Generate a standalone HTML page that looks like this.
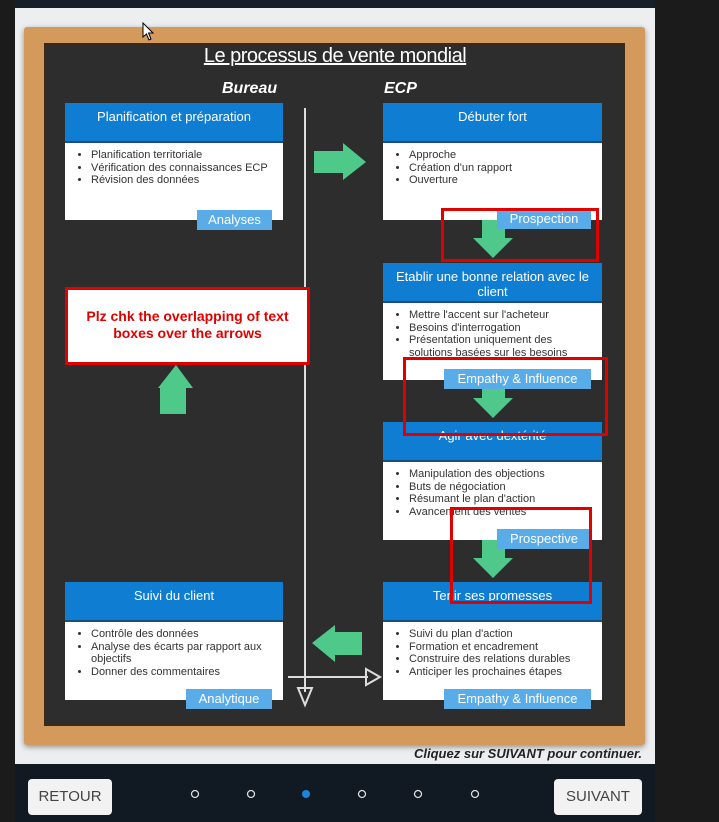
<!DOCTYPE html>
<html><head><meta charset="utf-8"><style>
*{margin:0;padding:0;box-sizing:border-box}
body{width:719px;height:822px;background:#1b1b1b;position:relative;overflow:hidden;font-family:"Liberation Sans",sans-serif}
.a{position:absolute}
.hd{position:absolute;background:#0f7dd2;color:#fff;font-size:13px;text-align:center;padding-top:6px;line-height:15px;border-bottom:2px solid #1b4f7a}
.bd{position:absolute;background:#fff;color:#333;font-size:11px;line-height:12.5px;padding:6px 4px 0 26px}
.bd li{list-style:disc}
.tag{position:absolute;background:#5aace8;color:#fff;font-size:13px;text-align:center;line-height:20px;height:20px}
.red{position:absolute;border:3px solid #e00000}
</style></head><body>
<div class="a" style="left:15px;top:0;width:640px;height:8px;background:#161e29"></div>
<div class="a" style="left:15px;top:8px;width:640px;height:756px;background:#eceef0"></div>
<div class="a" style="left:15px;top:764px;width:640px;height:58px;background:#111923"></div>
<!-- frame -->
<div class="a" style="left:24px;top:27px;width:621px;height:718px;background:#d49a5c;border-radius:3px;box-shadow:0 2px 6px rgba(0,0,0,.4)"></div>
<div class="a" style="left:44px;top:43px;width:581px;height:683px;background:#2d2d2d;border:2px solid #3a2a1a"></div>
<div class="a" style="left:0;top:45px;width:670px;text-align:center;color:#fff;font-size:20px;text-decoration:underline;letter-spacing:-.5px">Le processus de vente mondial</div>
<div class="a" style="left:222px;top:80px;color:#fff;font-size:16px;font-style:italic;font-weight:bold">Bureau</div>
<div class="a" style="left:384px;top:80px;color:#fff;font-size:16px;font-style:italic;font-weight:bold">ECP</div>
<!-- lines -->
<svg class="a" style="left:0;top:0" width="719" height="822">
<line x1="305" y1="108" x2="305" y2="692" stroke="#ddd" stroke-width="2"/>
<path d="M298 688 L312 688 L305 705 Z" fill="none" stroke="#ddd" stroke-width="2"/>
<line x1="288" y1="677" x2="368" y2="677" stroke="#ddd" stroke-width="2"/>
<path d="M366 669 L380 677 L366 685 Z" fill="none" stroke="#ddd" stroke-width="2"/>
<g fill="#4ec98a">
<path d="M314 151 L343 151 L343 143 L366 162 L343 180 L343 173 L314 173 Z"/>
<path d="M160 414 L160 388 L158 388 L176 365 L193 388 L186 388 L186 414 Z"/>
<path d="M362 632 L335 632 L335 625 L312 643 L335 662 L335 655 L362 655 Z"/>
<path d="M482 220 L505 220 L505 238 L513 238 L493 258 L473 238 L482 238 Z"/>
<path d="M482 380 L505 380 L505 398 L513 398 L493 418 L473 398 L482 398 Z"/>
<path d="M482 540 L505 540 L505 558 L513 558 L493 578 L473 558 L482 558 Z"/>
</g></svg>
<!-- left boxes -->
<div class="hd" style="left:65px;top:103px;width:218px;height:40px">Planification et préparation</div>
<div class="bd" style="left:65px;top:143px;width:218px;height:77px"><ul><li>Planification territoriale</li><li>Vérification des connaissances ECP</li><li>Révision des données</li></ul></div>
<div class="tag" style="left:197px;top:210px;width:75px">Analyses</div>
<div class="hd" style="left:65px;top:582px;width:218px;height:40px">Suivi du client</div>
<div class="bd" style="left:65px;top:622px;width:218px;height:78px"><ul><li>Contrôle des données</li><li>Analyse des écarts par rapport aux objectifs</li><li>Donner des commentaires</li></ul></div>
<div class="tag" style="left:186px;top:689px;width:86px">Analytique</div>
<!-- right boxes -->
<div class="hd" style="left:383px;top:103px;width:219px;height:40px">Débuter fort</div>
<div class="bd" style="left:383px;top:143px;width:219px;height:77px"><ul><li>Approche</li><li>Création d'un rapport</li><li>Ouverture</li></ul></div>
<div class="tag" style="left:497px;top:209px;width:94px">Prospection</div>
<div class="hd" style="left:383px;top:263px;width:219px;height:40px">Etablir une bonne relation avec le client</div>
<div class="bd" style="left:383px;top:303px;width:219px;height:77px;overflow:hidden"><ul><li>Mettre l'accent sur l'acheteur</li><li>Besoins d'interrogation</li><li>Présentation uniquement des solutions basées sur les besoins</li></ul></div>
<div class="tag" style="left:444px;top:369px;width:147px">Empathy &amp; Influence</div>
<div class="hd" style="left:383px;top:422px;width:219px;height:40px">Agir avec dextérité</div>
<div class="bd" style="left:383px;top:462px;width:219px;height:78px"><ul><li>Manipulation des objections</li><li>Buts de négociation</li><li>Résumant le plan d'action</li><li>Avancement des ventes</li></ul></div>
<div class="tag" style="left:497px;top:529px;width:94px">Prospective</div>
<div class="hd" style="left:383px;top:582px;width:219px;height:40px">Tenir ses promesses</div>
<div class="bd" style="left:383px;top:622px;width:219px;height:78px"><ul><li>Suivi du plan d'action</li><li>Formation et encadrement</li><li>Construire des relations durables</li><li>Anticiper les prochaines étapes</li></ul></div>
<div class="tag" style="left:444px;top:689px;width:147px">Empathy &amp; Influence</div>
<!-- red annotations -->
<div class="red" style="left:441px;top:208px;width:158px;height:54px"></div>
<div class="red" style="left:403px;top:357px;width:205px;height:79px"></div>
<div class="red" style="left:450px;top:507px;width:142px;height:97px"></div>
<div class="a" style="left:65px;top:287px;width:245px;height:78px;background:#fff;border:3px solid #e00000;color:#e00000;font-weight:bold;font-size:14px;text-align:center;line-height:17px;padding-top:18px">Plz chk the overlapping of text<br>boxes over the arrows</div>
<div class="a" style="left:300px;top:746px;width:342px;text-align:right;color:#222;font-size:13px;font-style:italic;font-weight:bold">Cliquez sur SUIVANT pour continuer.</div>
<!-- nav -->
<div class="a" style="left:28px;top:779px;width:84px;height:36px;background:#f2f2f2;border-radius:4px;color:#444;font-size:15px;text-align:center;line-height:36px">RETOUR</div>
<div class="a" style="left:554px;top:779px;width:88px;height:36px;background:#f2f2f2;border-radius:4px;color:#444;font-size:15px;text-align:center;line-height:36px">SUIVANT</div>
<svg class="a" style="left:0;top:780px" width="719" height="30">
<g fill="none" stroke="#ddd" stroke-width="1.3"><circle cx="195" cy="14" r="3.5"/><circle cx="251" cy="14" r="3.5"/><circle cx="362" cy="14" r="3.5"/><circle cx="418" cy="14" r="3.5"/><circle cx="475" cy="14" r="3.5"/></g>
<circle cx="306" cy="14" r="4" fill="#1a86d8"/></svg>
<svg class="a" style="left:142px;top:22px" width="14" height="20"><path d="M1 1 L1 15 L4.5 12 L7 18 L9 17 L6.5 11 L11 11 Z" fill="#fff" stroke="#000"/></svg>
</body></html>
